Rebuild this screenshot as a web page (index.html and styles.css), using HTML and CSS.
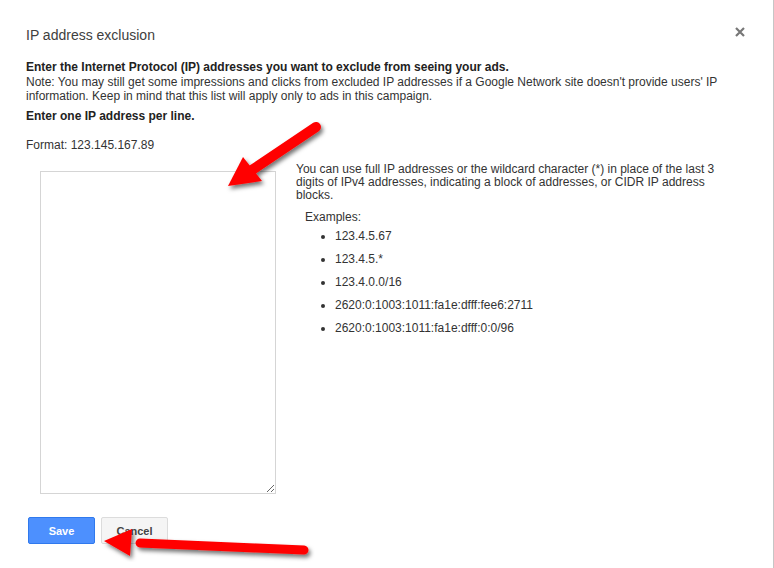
FILE: index.html
```html
<!DOCTYPE html>
<html lang="en">
<head>
    <meta charset="UTF-8">
    <title>IP address exclusion</title>
    <link rel="stylesheet" href="styles.css">
</head>
<body>
    <div class="dialog">
        <div class="title-bar">
            <h1>IP address exclusion</h1>
            <svg class="close" width="10" height="10" viewBox="0 0 10 10">
                <path d="M1 1 L9 9 M9 1 L1 9" stroke="#777" stroke-width="2.2"/>
            </svg>
        </div>
        <p class="lead">Enter the Internet Protocol (IP) addresses you want to exclude from seeing your ads.</p>
        <p class="note">Note: You may still get some impressions and clicks from excluded IP addresses if a Google Network site doesn't provide users' IP information. Keep in mind that this list will apply only to ads in this campaign.</p>
        <p class="lead per-line">Enter one IP address per line.</p>
        <p class="format">Format: 123.145.167.89</p>
        <div class="entry">
            <textarea class="ip-list"></textarea>
            <div class="help">
                <p>You can use full IP addresses or the wildcard character (*) in place of the last 3 digits of IPv4 addresses, indicating a block of addresses, or CIDR IP address blocks.</p>
                <div class="examples">
                    <div>Examples:</div>
                    <ul>
                        <li>123.4.5.67</li>
                        <li>123.4.5.*</li>
                        <li>123.4.0.0/16</li>
                        <li>2620:0:1003:1011:fa1e:dfff:fee6:2711</li>
                        <li>2620:0:1003:1011:fa1e:dfff:0:0/96</li>
                    </ul>
                </div>
            </div>
        </div>
        <div class="buttons">
            <button class="btn btn-save">Save</button>
            <button class="btn btn-cancel">Cancel</button>
        </div>

        <svg class="arrow arrow-top" width="120" height="90" viewBox="0 0 120 90">
            <defs>
                <filter id="shadow" x="-20%" y="-20%" width="140%" height="140%">
                    <feDropShadow dx="2" dy="3" stdDeviation="2" flood-color="#000" flood-opacity="0.55"/>
                </filter>
            </defs>
            <g filter="url(#shadow)">
                <line x1="104" y1="13" x2="40" y2="56" stroke="#f00" stroke-width="10" stroke-linecap="round"/>
                <polygon points="16,72 31,43 50,67" fill="#f00"/>
            </g>
        </svg>
        <svg class="arrow arrow-bottom" width="230" height="40" viewBox="0 0 230 40">
            <g filter="url(#shadow)">
                <line x1="204" y1="24" x2="40" y2="17" stroke="#f00" stroke-width="9" stroke-linecap="round"/>
                <polygon points="4,15 32,3 30,30" fill="#f00"/>
            </g>
        </svg>
    </div>
</body>
</html>
```

FILE: styles.css
```css
body {
    margin: 0;
    font-family: 'Liberation Sans', Arial, sans-serif;
    font-size: 12px;
    color: #333333;
    background-color: #ffffff;
}
.dialog {
    position: relative;
    box-sizing: border-box;
    width: 774px;
    height: 568px;
    padding: 25px 28px 0 26px;
    border-right: 1px solid #c6c6c6;
    overflow: hidden;
}
.title-bar {
    display: flex;
    justify-content: space-between;
    align-items: center;
}
h1 {
    margin: 0;
    font-size: 14px;
    font-weight: normal;
    line-height: 20px;
    color: #404040;
}
.close {
    margin-top: -6px;
}
p {
    margin: 0;
}
.lead {
    font-weight: bold;
    color: #222222;
    line-height: 15px;
    margin-top: 15px;
}
.note {
    line-height: 14px;
    color: #333333;
}
.per-line {
    margin-top: 6px;
}
.format {
    margin-top: 14px;
    line-height: 15px;
}
.entry {
    display: flex;
    margin-top: 18px;
    padding-left: 14px;
}
.ip-list {
    width: 236px;
    height: 323px;
    box-sizing: border-box;
    margin: 0;
    border: 1px solid #d5d5d5;
    resize: both;
}
.help {
    margin-left: 20px;
    margin-top: -8px;
    line-height: 13px;
    width: 430px;
}
.examples {
    margin-top: 8px;
    padding-left: 9px;
}
.examples div {
    line-height: 14px;
}
.examples ul {
    margin: 5px 0 0 0;
    padding-left: 30px;
}
.examples li {
    line-height: 14px;
    margin-bottom: 9px;
}
.buttons {
    display: flex;
    gap: 6px;
    margin-top: 23px;
    padding-left: 2px;
}
.btn {
    font-family: 'Liberation Sans', Arial, sans-serif;
    font-size: 11px;
    font-weight: bold;
    height: 27px;
    min-width: 67px;
    padding: 0 8px;
    border-radius: 2px;
}
.btn-save {
    background-color: #4d90fe;
    border: 1px solid #3079ed;
    color: #ffffff;
}
.btn-cancel {
    background-color: #f5f5f5;
    border: 1px solid #dcdcdc;
    color: #444444;
}
.arrow {
    position: absolute;
}
.arrow-top {
    left: 212px;
    top: 114px;
}
.arrow-bottom {
    left: 100px;
    top: 526px;
}
```
